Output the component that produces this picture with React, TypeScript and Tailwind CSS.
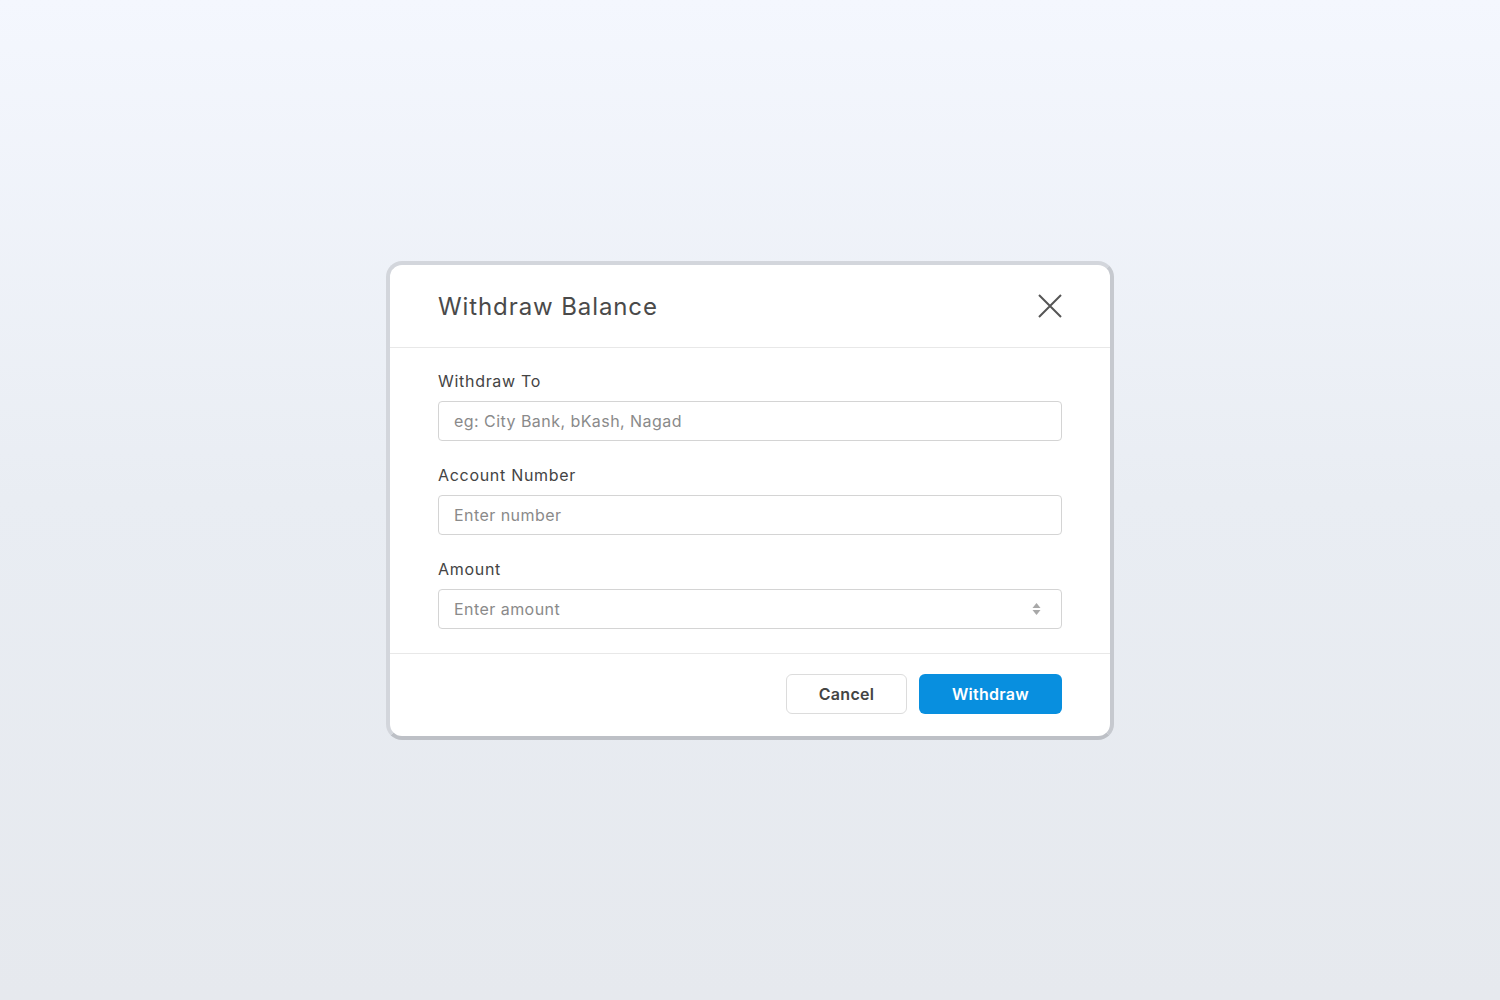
const Field = ({ label, placeholder, spinner }: { label: string; placeholder: string; spinner?: boolean }) => (
  <div className="flex flex-col gap-2">
    <label className="text-[16px] leading-6 tracking-[0.7px] text-[#444]">{label}</label>
    <div className="flex h-10 items-center rounded border border-[#d4d4d4] bg-white pl-[15px] pr-5">
      <input
        type="text"
        placeholder={placeholder}
        className="h-full flex-1 bg-transparent text-[16px] tracking-[0.45px] text-[#444] placeholder:text-[#8a8a8a] outline-none"
      />
      {spinner && (
        <svg width="9" height="14" viewBox="0 0 9 14" className="text-[#a8a8a8]">
          <path d="M4.5 1 L8.5 6 H0.5 Z" fill="currentColor" />
          <path d="M4.5 13 L8.5 8 H0.5 Z" fill="currentColor" />
        </svg>
      )}
    </div>
  </div>
)

const App = () => {
  return (
    <div
      className="flex min-h-screen w-full items-center justify-center bg-gradient-to-b from-[#f4f7fe] via-[#e9edf3] to-[#e6e9ee]"
      style={{ fontFamily: "Inter, 'Open Sans', sans-serif" }}
    >
      <div className="w-[728px] rounded-[16px] border-4 border-[#d3d6dc] border-b-[#bdc0c6] border-r-[#c6c9cf] bg-white">
        <div className="flex h-[83px] items-center justify-between border-b border-[#e8e8e8] px-12">
          <h2 className="pt-[2px] text-[24px] font-normal tracking-[0.9px] text-[#4a4a4a]">Withdraw Balance</h2>
          <button className="flex h-6 w-6 items-center justify-center text-[#555]">
            <svg width="24" height="24" viewBox="0 0 24 24">
              <path d="M1 1 L23 23 M23 1 L1 23" stroke="currentColor" strokeWidth="2" fill="none" />
            </svg>
          </button>
        </div>
        <div className="flex flex-col gap-[22px] px-12 pt-[21px] pb-6">
          <Field label="Withdraw To" placeholder="eg: City Bank, bKash, Nagad" />
          <Field label="Account Number" placeholder="Enter number" />
          <Field label="Amount" placeholder="Enter amount" spinner />
        </div>
        <div className="flex justify-end gap-3 border-t border-[#e8e8e8] px-12 pt-5 pb-[22px]">
          <button className="h-10 w-[121px] rounded-md border border-[#dcdcdc] bg-white text-[16px] font-semibold tracking-[0.3px] text-[#444]">
            Cancel
          </button>
          <button className="h-10 w-[143px] rounded-md bg-[#088fdf] text-[16px] font-semibold tracking-[0.3px] text-white">
            Withdraw
          </button>
        </div>
      </div>
    </div>
  )
}

export default App
